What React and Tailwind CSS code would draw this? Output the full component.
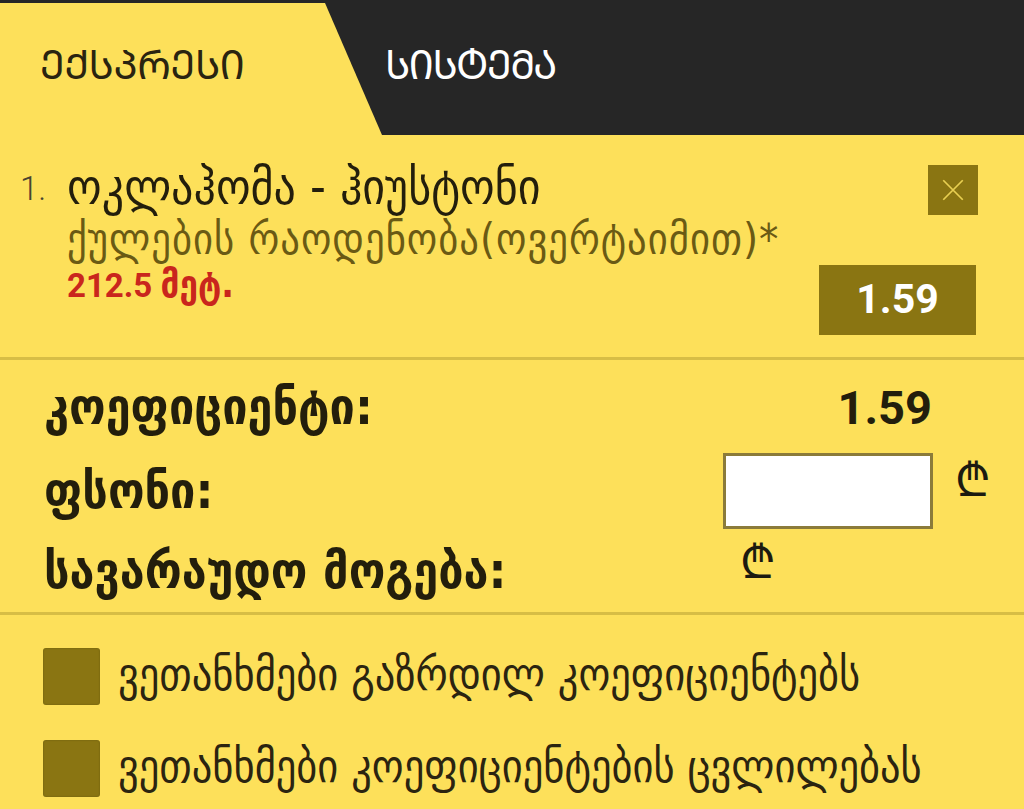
const KA = { fontFamily: "'DejaVu Sans Condensed', 'DejaVu Sans', sans-serif" };
const NUM = { fontFamily: "Roboto, 'Liberation Sans', sans-serif" };
const CAPS = { fontFamily: "'Noto Sans Georgian', 'Noto Sans', sans-serif" };

// Mkhedruli -> Mtavruli (the tabs are drawn in Georgian capitals)
const mtavruli = (s) =>
  Array.from(s)
    .map((ch) => {
      const c = ch.charCodeAt(0);
      return c >= 0x10d0 && c <= 0x10fa ? String.fromCharCode(c - 0x10d0 + 0x1c90) : ch;
    })
    .join("");

const Lari = ({ className = "" }) => (
  <span className={`text-[46px] leading-none text-[#1c1a10] ${className}`} style={{ fontFamily: "'DejaVu Sans', sans-serif" }}>
    ₾
  </span>
);

const Checkbox = ({ label }) => (
  <div className="flex items-center gap-[18px] h-[58px]">
    <div className="w-[57px] h-[57px] rounded-[3px] bg-[#8a7512] shadow-[inset_0_0_2px_rgba(0,0,0,0.25)]" />
    <span className="text-[45px] leading-none text-[#2b2410] -mt-[4px]" style={KA}>
      {label}
    </span>
  </div>
);

export default function App() {
  return (
    <div className="w-[1024px] h-[809px] overflow-hidden bg-[#fde05a]" style={NUM}>
      {/* Tabs */}
      <div className="flex h-[135px] bg-[#262626] pt-[3px]">
        <div className="w-[382px] h-full bg-[#fde05a] [clip-path:polygon(0_0,325px_0,100%_100%,0_100%)] flex items-center pl-[40px] pb-[10px]">
          <span className="text-[40px] leading-none tracking-[-0.5px] text-[#2a2410]" style={CAPS}>
            {mtavruli("ექსპრესი")}
          </span>
        </div>
        <div className="flex items-center pl-[3px] pb-[10px]">
          <span className="text-[40px] leading-none tracking-[-1.5px] text-white" style={CAPS}>
            {mtavruli("სისტემა")}
          </span>
        </div>
      </div>

      {/* Selected event */}
      <div className="relative h-[225px] border-b-[3px] border-[#d7bd45] pl-[20px] pt-[28px]">
        <div className="flex items-center h-[52px]">
          <span className="w-[47px] text-[33px] font-light text-[#4a4330]">1.</span>
          <span className="text-[49px] leading-none text-[#231e0c] -mt-[4px]" style={KA}>
            ოკლაჰომა - ჰიუსტონი
          </span>
        </div>
        <div className="pl-[47px] h-[48px] flex items-center text-[43px] leading-none tracking-[1px] text-[#6a5a14]" style={KA}>
          ქულების რაოდენობა(ოვერტაიმით)*
        </div>
        <div className="pl-[47px] h-[40px] pt-[4px] flex items-center font-bold text-[#c9261d]">
          <span className="text-[33px] leading-none">212.5&nbsp;</span>
          <span className="text-[37px] leading-none -mt-[2px]" style={KA}>
            მეტ.
          </span>
        </div>

        <button className="absolute left-[928px] top-[30px] w-[50px] h-[50px] bg-[#8a7512] flex items-center justify-center">
          <svg viewBox="0 0 24 24" className="w-[26px] h-[26px]" stroke="#e8cf52" strokeWidth="1.6">
            <path d="M3 3 L21 21 M21 3 L3 21" />
          </svg>
        </button>
        <div className="absolute left-[819px] top-[130px] w-[157px] h-[70px] bg-[#8a7512] flex items-center justify-center">
          <span className="text-[41px] font-bold text-white">1.59</span>
        </div>
      </div>

      {/* Totals */}
      <div className="h-[255px] border-b-[3px] border-[#d7bd45] pl-[44px] pt-[5px] flex flex-col">
        <div className="flex items-center h-[84px]">
          <span className="w-[700px] text-[50px] leading-none font-bold text-[#231e0c]" style={KA}>
            კოეფიციენტი:
          </span>
          <span className="w-[188px] text-right text-[47px] leading-none font-bold text-[#231e0c]">1.59</span>
        </div>
        <div className="flex items-center h-[84px]">
          <span className="w-[679px] text-[50px] leading-none font-bold text-[#231e0c]" style={KA}>
            ფსონი:
          </span>
          <input className="w-[210px] h-[76px] bg-white border-[3px] border-[#8b7b3a] outline-none" />
          <Lari className="ml-[22px] -mt-[23px]" />
        </div>
        <div className="flex items-center h-[76px]">
          <span className="w-[696px] text-[50px] leading-none font-bold text-[#231e0c]" style={KA}>
            სავარაუდო მოგება:
          </span>
          <Lari className="-mt-[19px]" />
        </div>
      </div>

      {/* Agreements */}
      <div className="pl-[43px] pt-[32px] flex flex-col gap-[34px]">
        <Checkbox label="ვეთანხმები გაზრდილ კოეფიციენტებს" />
        <Checkbox label="ვეთანხმები კოეფიციენტების ცვლილებას" />
      </div>
    </div>
  );
}
